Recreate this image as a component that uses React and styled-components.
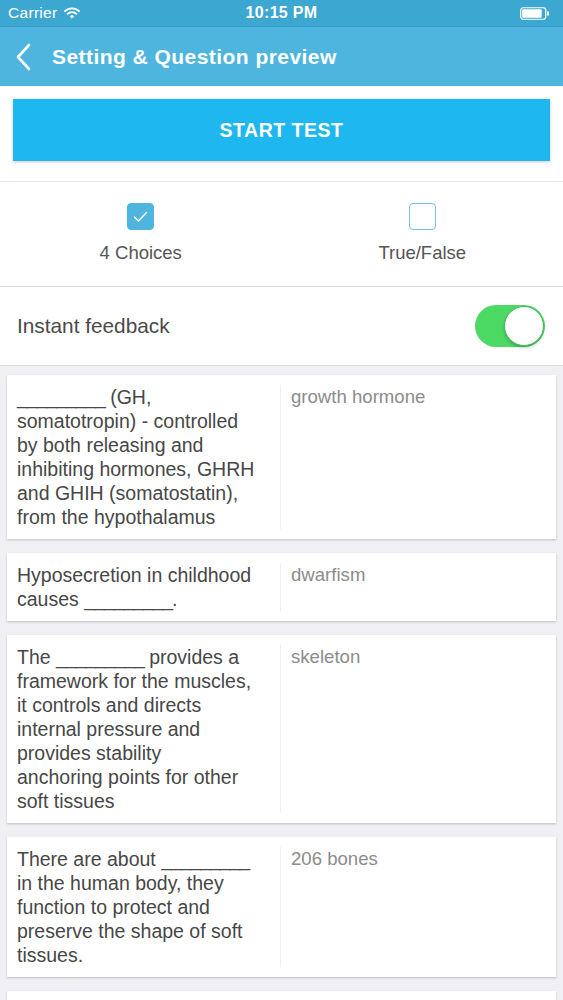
import React from "react";
import styled, { createGlobalStyle } from "styled-components";

const Global = createGlobalStyle`
  html, body { margin: 0; padding: 0; background: #efeff4; }
  body { font-family: "Liberation Sans", Arial, sans-serif; -webkit-font-smoothing: antialiased; }
  * { box-sizing: border-box; }
`;

const Screen = styled.div`
  width: 563px;
  height: 1000px;
  background: #efeff4;
  overflow: hidden;
`;

const StatusBar = styled.div`
  height: 27px;
  background: #3ca7d0;
  color: #fff;
  display: flex;
  align-items: center;
  justify-content: space-between;
  padding: 0 13px 0 8px;
  position: relative;
  font-size: 15.5px;
  border-bottom: 1px solid #3a9fc6;
`;

const Carrier = styled.div`
  display: flex;
  align-items: center;
  gap: 7px;
  letter-spacing: 0.3px;
`;

const Clock = styled.div`
  position: absolute;
  left: 0;
  right: 0;
  text-align: center;
  font-size: 16px;
  font-weight: 600;
  letter-spacing: 0.3px;
  pointer-events: none;
`;

const NavBar = styled.div`
  height: 59px;
  background: #4db5de;
  display: flex;
  align-items: center;
  padding: 0 0 0 14px;
  gap: 18px;
  color: #fff;
`;

const Title = styled.div`
  font-size: 21px;
  font-weight: 700;
  letter-spacing: 0.45px;
`;

const ButtonArea = styled.div`
  background: #fff;
  padding: 13px 13px 20px 13px;
  border-bottom: 1px solid #e6e6ea;
`;

const StartButton = styled.button`
  width: 100%;
  height: 62px;
  border: none;
  background: #1fb7ef;
  color: #fff;
  font-family: inherit;
  font-size: 19.5px;
  font-weight: 700;
  letter-spacing: 0.5px;
  box-shadow: 0 1px 3px rgba(0, 0, 0, 0.22);
`;

const ChoiceRow = styled.div`
  background: #fff;
  display: grid;
  grid-template-columns: 1fr 1fr;
  padding: 21px 0 23px;
  border-bottom: 1px solid #dcdce0;
`;

const Choice = styled.div`
  display: flex;
  flex-direction: column;
  align-items: center;
  gap: 12px;
  color: #555;
  font-size: 18.5px;
  line-height: 21px;
`;

const Box = styled.div`
  width: 27px;
  height: 27px;
  border-radius: 4px;
  display: flex;
  align-items: center;
  justify-content: center;
  background: ${(p) => (p.$checked ? "#4db5de" : "#fff")};
  border: 1.5px solid ${(p) => (p.$checked ? "#4db5de" : "#72c2e0")};
`;

const FeedbackRow = styled.div`
  background: #fff;
  height: 79px;
  display: flex;
  align-items: center;
  justify-content: space-between;
  padding: 0 18px 0 17px;
  font-size: 20.8px;
  color: #4a4a4a;
  border-bottom: 1px solid #dcdce0;
`;

const Toggle = styled.div`
  width: 70px;
  height: 42px;
  border-radius: 21px;
  background: #4cd964;
  position: relative;
`;

const Knob = styled.div`
  position: absolute;
  right: 1px;
  top: 1px;
  width: 40px;
  height: 40px;
  border-radius: 50%;
  background: #fff;
  border: 1.5px solid #43b85a;
  box-shadow: 0 2px 3px rgba(0, 0, 0, 0.2);
`;

const List = styled.div`
  padding: 9px 7px 0 7px;
  display: flex;
  flex-direction: column;
  gap: 14px;
`;

const Card = styled.div`
  background: #fff;
  display: grid;
  grid-template-columns: 274px 1fr;
  padding: 10px 0;
  box-shadow: 0 1px 2px rgba(0, 0, 0, 0.2);
`;

const Question = styled.div`
  padding: 0 4px 0 10px;
  font-size: 19.5px;
  line-height: 24px;
  color: #474747;
  border-right: 1px solid #f0f0f2;
`;

const Line = styled.span`
  display: block;
  white-space: nowrap;
`;

const Blank = styled.span`
  letter-spacing: -1.1px;
`;

const Answer = styled.div`
  padding: 0 10px 0 10px;
  font-size: 18.6px;
  line-height: 24px;
  color: #8c8c8c;
`;

const B = "_________";

const items = [
  {
    q: [
      [B, " (GH,"],
      ["somatotropin) - controlled"],
      ["by both releasing and"],
      ["inhibiting hormones, GHRH"],
      ["and GHIH (somatostatin),"],
      ["from the hypothalamus"],
    ],
    a: "growth hormone",
  },
  {
    q: [["Hyposecretion in childhood"], ["causes ", B, "."]],
    a: "dwarfism",
  },
  {
    q: [
      ["The ", B, " provides a"],
      ["framework for the muscles,"],
      ["it controls and directs"],
      ["internal pressure and"],
      ["provides stability"],
      ["anchoring points for other"],
      ["soft tissues"],
    ],
    a: "skeleton",
  },
  {
    q: [
      ["There are about ", B],
      ["in the human body, they"],
      ["function to protect and"],
      ["preserve the shape of soft"],
      ["tissues."],
    ],
    a: "206 bones",
  },
  {
    q: [["Bones store ", B, " and"], ["phosphate."]],
    a: "calcium",
  },
];

export default function App() {
  return (
    <Screen>
      <Global />
      <StatusBar>
        <Carrier>
          Carrier
          <svg width="16" height="12" viewBox="0 0 16 12">
            <path d="M1 4.2a10 10 0 0 1 14 0" stroke="#fff" strokeWidth="1.8" fill="none" strokeLinecap="round" />
            <path d="M3.6 6.9a6.3 6.3 0 0 1 8.8 0" stroke="#fff" strokeWidth="1.8" fill="none" strokeLinecap="round" />
            <path d="M6.2 9.4a2.6 2.6 0 0 1 3.6 0L8 11.2z" fill="#fff" stroke="#fff" strokeWidth="1" strokeLinejoin="round" />
          </svg>
        </Carrier>
        <Clock>10:15 PM</Clock>
        <svg width="30" height="13" viewBox="0 0 30 13">
          <rect x="0.75" y="0.75" width="25" height="11.5" rx="2.5" fill="none" stroke="#fff" strokeWidth="1.2" />
          <rect x="2.2" y="2.2" width="19.5" height="8.6" rx="1" fill="#fff" />
          <rect x="27" y="4.3" width="2" height="4.4" rx="1" fill="#fff" />
        </svg>
      </StatusBar>
      <NavBar>
        <svg width="20" height="28" viewBox="0 0 20 28">
          <path d="M15 2 L4 14 L15 26" stroke="#fff" strokeWidth="2.6" fill="none" strokeLinecap="round" strokeLinejoin="round" />
        </svg>
        <Title>Setting &amp; Question preview</Title>
      </NavBar>
      <ButtonArea>
        <StartButton>START TEST</StartButton>
      </ButtonArea>
      <ChoiceRow>
        <Choice>
          <Box $checked>
            <svg width="15" height="12" viewBox="0 0 15 12">
              <path d="M1.5 6.2 L5.5 10 L13.5 1.5" stroke="#fff" strokeWidth="1.5" fill="none" strokeLinecap="round" strokeLinejoin="round" />
            </svg>
          </Box>
          4 Choices
        </Choice>
        <Choice>
          <Box />
          True/False
        </Choice>
      </ChoiceRow>
      <FeedbackRow>
        Instant feedback
        <Toggle>
          <Knob />
        </Toggle>
      </FeedbackRow>
      <List>
        {items.map((it, i) => (
          <Card key={i}>
            <Question>
              {it.q.map((parts, j) => (
                <Line key={j}>
                  {parts.map((p, k) => (p === B ? <Blank key={k}>{p}</Blank> : <React.Fragment key={k}>{p}</React.Fragment>))}
                </Line>
              ))}
            </Question>
            <Answer>{it.a}</Answer>
          </Card>
        ))}
      </List>
    </Screen>
  );
}
